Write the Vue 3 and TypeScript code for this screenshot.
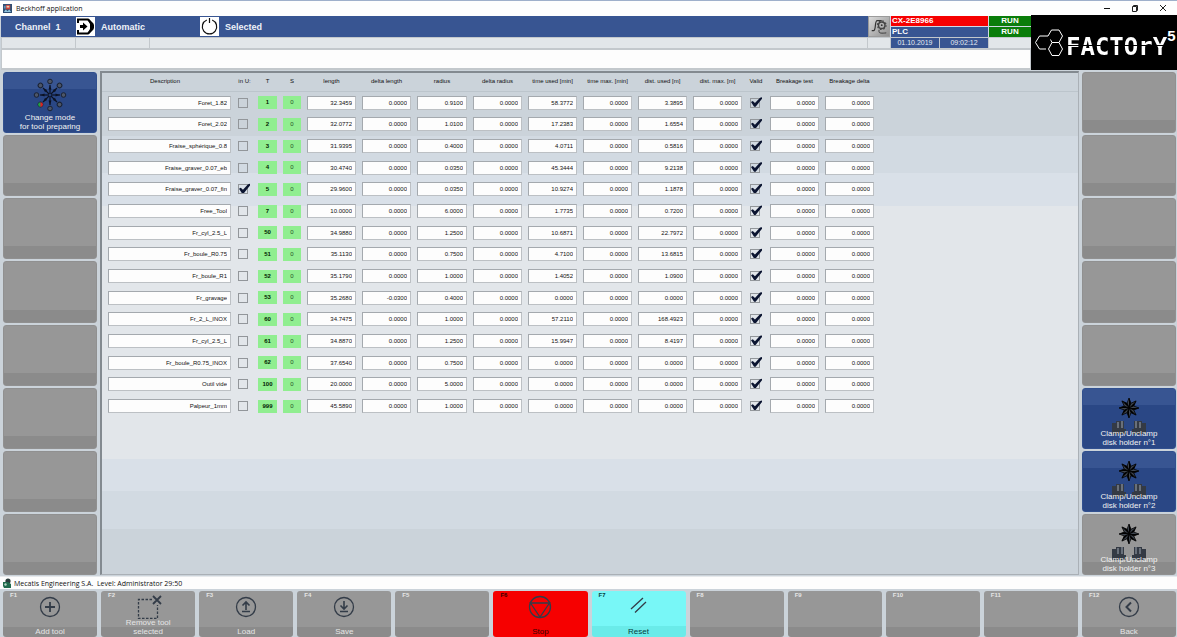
<script setup lang="ts">
import { ref } from 'vue'

interface Tool {
  name: string
  inUse: boolean
  t: number
  values: string[]
}

interface SideKey {
  lines: string[]
  icon: '' | 'wheel' | 'clamp'
  active: boolean
}

interface FunctionKey {
  key: string
  lines: string[]
  icon: '' | 'add' | 'remove' | 'load' | 'save' | 'stop' | 'reset' | 'back'
  tone: 'grey' | 'red' | 'cyan'
}

const zero = '0.0000'

const makeTool = (
  name: string,
  t: number,
  length: string,
  radius: string,
  time: string,
  dist: string,
  deltaLength = zero,
  inUse = false,
): Tool => ({
  name,
  t,
  inUse,
  values: [length, deltaLength, radius, zero, time, zero, dist, zero],
})

const tools = ref<Tool[]>([
  makeTool('Foret_1.82', 1, '32.3459', '0.9100', '58.3772', '3.3895'),
  makeTool('Foret_2.02', 2, '32.0772', '1.0100', '17.2383', '1.6554'),
  makeTool('Fraise_sphérique_0.8', 3, '31.9395', '0.4000', '4.0711', '0.5816'),
  makeTool('Fraise_graver_0.07_eb', 4, '30.4740', '0.0350', '45.3444', '9.2138'),
  makeTool('Fraise_graver_0.07_fin', 5, '29.9600', '0.0350', '10.9274', '1.1878', zero, true),
  makeTool('Free_Tool', 7, '10.0000', '6.0000', '1.7735', '0.7200'),
  makeTool('Fr_cyl_2.5_L', 50, '34.9880', '1.2500', '10.6871', '22.7972'),
  makeTool('Fr_boule_R0.75', 51, '35.1130', '0.7500', '4.7100', '13.6815'),
  makeTool('Fr_boule_R1', 52, '35.1790', '1.0000', '1.4052', '1.0900'),
  makeTool('Fr_gravage', 53, '35.2680', '0.4000', zero, zero, '-0.0300'),
  makeTool('Fr_2_L_INOX', 60, '34.7475', '1.0000', '57.2110', '168.4923'),
  makeTool('Fr_cyl_2.5_L', 61, '34.8870', '1.2500', '15.9947', '8.4197'),
  makeTool('Fr_boule_R0.75_INOX', 62, '37.6540', '0.7500', zero, zero),
  makeTool('Outil vide', 100, '20.0000', '5.0000', zero, zero),
  makeTool('Palpeur_1mm', 999, '45.5890', '1.0000', zero, zero),
])

const valueHeads = [
  'length',
  'delta length',
  'radius',
  'delta radius',
  'time used [min]',
  'time max. [min]',
  'dist. used [m]',
  'dist. max. [m]',
]

const emptyKey: SideKey = { lines: [], icon: '', active: false }
const leftKeys: SideKey[] = [
  { lines: ['Change mode', 'for tool preparing'], icon: 'wheel', active: true },
  ...Array.from({ length: 7 }, () => emptyKey),
]
const rightKeys: SideKey[] = [
  ...Array.from({ length: 5 }, () => emptyKey),
  { lines: ['Clamp/Unclamp', 'disk holder n°1'], icon: 'clamp', active: true },
  { lines: ['Clamp/Unclamp', 'disk holder n°2'], icon: 'clamp', active: true },
  { lines: ['Clamp/Unclamp', 'disk holder n°3'], icon: 'clamp', active: false },
]

const functionKeys: FunctionKey[] = [
  { key: 'F1', lines: ['Add tool'], icon: 'add', tone: 'grey' },
  { key: 'F2', lines: ['Remove tool', 'selected'], icon: 'remove', tone: 'grey' },
  { key: 'F3', lines: ['Load'], icon: 'load', tone: 'grey' },
  { key: 'F4', lines: ['Save'], icon: 'save', tone: 'grey' },
  { key: 'F5', lines: [], icon: '', tone: 'grey' },
  { key: 'F6', lines: ['Stop'], icon: 'stop', tone: 'red' },
  { key: 'F7', lines: ['Reset'], icon: 'reset', tone: 'cyan' },
  { key: 'F8', lines: [], icon: '', tone: 'grey' },
  { key: 'F9', lines: [], icon: '', tone: 'grey' },
  { key: 'F10', lines: [], icon: '', tone: 'grey' },
  { key: 'F11', lines: [], icon: '', tone: 'grey' },
  { key: 'F12', lines: ['Back'], icon: 'back', tone: 'grey' },
]

const spokes = [0, 45, 90, 135, 180, 225, 270, 315]
</script>

<template>
  <div class="app">
    <div class="titlebar">
      <svg class="app-icon" viewBox="0 0 10 10" aria-hidden="true">
        <rect width="10" height="10" fill="#2f4f74" />
        <rect x="3" y="1" width="5" height="5" fill="#c8423a" />
        <rect x="4" y="2" width="3" height="2" fill="#e8c9b0" />
        <path d="M1 9L3 6L5 8L7 6L9 9Z" fill="#8fc4dd" />
        <rect x="1" y="2" width="2" height="3" fill="#5f8fb5" />
      </svg>
      <span class="title">Beckhoff application</span>
      <div class="window-buttons">
        <button type="button" aria-label="Minimize">
          <svg viewBox="0 0 8 8"><path d="M1 4.5H7" stroke="#111" fill="none" /></svg>
        </button>
        <button type="button" aria-label="Restore">
          <svg viewBox="0 0 8 8">
            <path d="M1.5 2.5H5.5V7.5H1.5ZM2.5 2.5V1.5H6.5V6.5H5.5" stroke="#222" fill="none" />
          </svg>
        </button>
        <button type="button" aria-label="Close">
          <svg viewBox="0 0 8 8"><path d="M1 1L7 7M7 1L1 7" stroke="#222" fill="none" /></svg>
        </button>
      </div>
    </div>

    <header class="top">
      <div class="top-left">
        <div class="bar">
          <div class="channel-bar">
            <span class="channel">Channel&nbsp; 1</span>
            <svg class="mode-icon" viewBox="0 0 19 19" aria-hidden="true">
              <rect width="19" height="19" fill="#fff" />
              <path d="M2 6V2.500H12L16.500 7V12L12 16.500H2V13" fill="none" stroke="#000" stroke-width="2" />
              <path d="M11 2H13L18 8V11L13 17H11L14 12V7Z" fill="#000" />
              <path d="M4 8H7V5.5L11.5 9.5L7 13.5V11H4Z" fill="#000" />
            </svg>
            <span class="mode">Automatic</span>
            <svg class="mode-icon" viewBox="0 0 19 19" aria-hidden="true">
              <rect width="19" height="19" fill="#fff" />
              <path d="M6.8 3A7.2 7.2 0 1 0 12.2 3M9.5 1V6" fill="none" stroke="#111" stroke-width="1.2" />
            </svg>
            <span class="selected">Selected</span>
          </div>
          <button class="tool-button" type="button" aria-label="Settings">
            <svg viewBox="0 0 22 21">
              <path d="M3 15H5C8 15 6 4 9 4H14" fill="none" stroke="#333" stroke-width="1.3" />
              <circle cx="14" cy="9" r="3.6" fill="none" stroke="#444" stroke-width="1.6" />
              <circle cx="14" cy="9" r="4.8" fill="none" stroke="#444" stroke-width="1.2" stroke-dasharray="1.8 1.97" />
              <circle cx="14" cy="9" r="1" fill="#333" />
              <path d="M11 14V16C11 18 14 18 19 17.5" fill="none" stroke="#333" />
            </svg>
          </button>
          <div class="machine">
            <span class="cx">CX-2E8966</span>
            <span class="run">RUN</span>
            <span class="plc">PLC</span>
            <span class="run">RUN</span>
          </div>
        </div>
        <div class="strip">
          <span class="cell"></span>
          <span class="cell"></span>
          <span class="cell wide"></span>
          <span class="cell small"></span>
          <span class="date">01.10.2019</span>
          <span class="date">09:02:12</span>
          <span class="cell end"></span>
        </div>
        <div class="message"></div>
      </div>
      <div class="logo">
        <svg class="hexes" viewBox="0 0 30 30" aria-hidden="true">
          <g fill="none" stroke="#fff" stroke-width="1" stroke-linejoin="round">
            <path d="M14 8L17.500 2H25L28.500 8L25 14.500H18L16.500 11.500" />
            <path d="M18 14.500L14.500 21L18 27.500H25L28.500 21L25 14.500" />
            <path d="M14 8H5.500L1.500 14.500L5.500 21H12" />
          </g>
        </svg>
        <span class="word">FACTOrY</span>
        <span class="five">5</span>
      </div>
    </header>

    <main class="main">
      <nav class="side">
        <button v-for="(k, i) in leftKeys" :key="i" type="button" class="side-key" :class="{ active: k.active }" :aria-label="k.lines.length ? undefined : `Left key ${i + 1}`">
          <svg v-if="k.icon === 'wheel'" class="wheel" viewBox="-17 -17 34 34" aria-hidden="true">
            <g v-for="a in spokes" :key="a" :transform="`rotate(${a})`">
              <path d="M0 -1V-10" stroke="#0b1222" stroke-width="1.200" />
              <path d="M-1.500 -5.500L0 -9.500L1.500 -5.500Z" fill="#0b1222" />
              <circle cy="-13.500" r="2.300" fill="#4d5668" stroke="#1a2233" />
            </g>
            <path d="M-9.500 7.200A2.400 2.400 0 0 0 -9.500 12Z" fill="#1fa046" />
            <path d="M-9.500 7.200A2.400 2.400 0 0 1 -9.500 12Z" fill="#e02424" />
          </svg>
          <span class="label"><span v-for="l in k.lines" :key="l">{{ l }}</span></span>
        </button>
      </nav>

      <section class="panel">
        <table>
          <colgroup>
            <col class="c-desc" />
            <col class="c-use" />
            <col class="c-t" />
            <col class="c-s" />
            <col v-for="h in valueHeads" :key="h" class="c-num" :class="{ broad: h === 'radius' }" />
            <col class="c-valid" />
            <col class="c-num" />
            <col class="c-num" />
          </colgroup>
          <thead>
            <tr>
              <th>Description</th>
              <th>in U:</th>
              <th>T</th>
              <th>S</th>
              <th v-for="h in valueHeads" :key="h">{{ h }}</th>
              <th>Valid</th>
              <th>Breakage test</th>
              <th>Breakage delta</th>
            </tr>
          </thead>
          <tbody>
            <tr v-for="tool in tools" :key="tool.t">
              <td><input v-model="tool.name" class="field" type="text" aria-label="Description" /></td>
              <td class="mid"><input v-model="tool.inUse" class="check" type="checkbox" aria-label="In use" /></td>
              <td><span class="badge strong">{{ tool.t }}</span></td>
              <td><span class="badge">0</span></td>
              <td v-for="(v, i) in tool.values" :key="i">
                <input class="field" type="text" :value="v" :aria-label="valueHeads[i]" />
              </td>
              <td class="mid"><input class="check" type="checkbox" checked aria-label="Valid" /></td>
              <td><input class="field" type="text" :value="zero" aria-label="Breakage test" /></td>
              <td><input class="field" type="text" :value="zero" aria-label="Breakage delta" /></td>
            </tr>
          </tbody>
        </table>
      </section>

      <nav class="side">
        <button v-for="(k, i) in rightKeys" :key="i" type="button" class="side-key" :class="{ active: k.active }" :aria-label="k.lines.length ? undefined : `Right key ${i + 1}`">
          <svg v-if="k.icon === 'clamp'" class="clamp" viewBox="0 0 36 40" aria-hidden="true">
            <g transform="translate(18 11)">
              <g v-for="a in spokes" :key="a" :transform="`rotate(${a})`">
                <path d="M0 0L-2 -4.500L0 -10L2 -4.500Z" fill="#3f4650" stroke="#000" stroke-width="0.800" />
                <path d="M0 0V-10L2 -4.500Z" fill="#000" />
              </g>
            </g>
            <path d="M1 26H5V24H13V32H15V37H1Z" fill="#343a44" />
            <path d="M35 26H31V24H23V32H21V37H35Z" fill="#343a44" />
            <path d="M6 25H8V31H6ZM10 24H12V31H10ZM24 24H26V31H24ZM28 25H30V31H28Z" fill="#69707a" />
          </svg>
          <span class="label"><span v-for="l in k.lines" :key="l">{{ l }}</span></span>
        </button>
      </nav>
    </main>

    <div class="statusbar">
      <svg class="user-icon" viewBox="0 0 10 10" aria-hidden="true">
        <circle cx="6" cy="3" r="2.600" fill="#2b3b3b" />
        <path d="M1 4H6L9 6V10H2L1 8Z" fill="#1f6a4c" />
        <circle cx="3.500" cy="6.500" r="1.200" fill="#b8d6c6" />
      </svg>
      <span>Mecatis Engineering S.A.&nbsp; Level: Administrator 29:50</span>
    </div>

    <footer class="fkeys">
      <button v-for="f in functionKeys" :key="f.key" type="button" class="fkey" :class="f.tone">
        <span class="fname">{{ f.key }}</span>
        <svg v-if="f.icon" class="ficon" viewBox="0 0 28 24" aria-hidden="true">
          <g fill="none" stroke="#333c48" stroke-width="1.300">
            <template v-if="f.icon === 'add'">
              <circle cx="14" cy="12" r="9.500" />
              <path d="M14 7V17M9 12H19" stroke-width="1.800" />
            </template>
            <template v-if="f.icon === 'remove'">
              <path d="M18 4.500H4.500V23.500H23.500V10" stroke-dasharray="2.500 1.500" />
              <path d="M19 1L27 9M27 1L19 9" stroke-width="1.800" />
            </template>
            <template v-if="f.icon === 'load'">
              <circle cx="14" cy="12" r="9.500" />
              <path d="M14 15V7M10.500 10.500L14 7L17.500 10.500M10 16.500H18" stroke-width="1.600" />
            </template>
            <template v-if="f.icon === 'save'">
              <circle cx="14" cy="12" r="9.500" />
              <path d="M14 6V14M10.500 10.500L14 14L17.500 10.500M10 16.500H18" stroke-width="1.600" />
            </template>
            <template v-if="f.icon === 'stop'">
              <circle cx="14" cy="12" r="10.500" />
              <path d="M4.500 8H23.500L14 22Z" />
            </template>
            <template v-if="f.icon === 'reset'">
              <path d="M6 14L18 3M10 17.500L21 7" />
            </template>
            <template v-if="f.icon === 'back'">
              <circle cx="14" cy="12" r="9.500" />
              <path d="M16 7.500L11.500 12L16 16.500" stroke-width="2" />
            </template>
          </g>
        </svg>
        <span class="label"><span v-for="l in f.lines" :key="l">{{ l }}</span></span>
      </button>
    </footer>
  </div>
</template>

<style>
body {
  margin: 0;
}
</style>

<style scoped>
.app {
  display: flex;
  flex-direction: column;
  min-height: 100vh;
  background: #cbd3da;
  font-family: "Liberation Sans", Arial, sans-serif;
  color: #111;
}

.app *,
.app {
  box-sizing: border-box;
}

button {
  border: 0;
  padding: 0;
  margin: 0;
  font: inherit;
  color: inherit;
  background: none;
}

svg {
  display: block;
}

.titlebar {
  display: flex;
  align-items: center;
  height: 15px;
  padding-left: 3px;
  border-top: 1px solid #9fb0cb;
  background: #fefefe;
  font: 7px "Open Sans", "Noto Sans", sans-serif;
}

.app-icon {
  width: 9px;
  height: 9px;
  margin-right: 4px;
}

.title {
  flex: 1;
}

.window-buttons {
  display: flex;
  gap: 20px;
  padding-right: 10px;
}

.window-buttons svg {
  width: 8px;
  height: 8px;
}

.top {
  display: grid;
  grid-template-columns: minmax(0, 1fr) 146px;
}

.top-left {
  padding-left: 1px;
  border-top: 1px solid #fefefe;
}

.bar {
  display: grid;
  grid-template-columns: minmax(0, 1fr) 22px 141px;
  height: 21px;
}

.channel-bar {
  display: flex;
  align-items: center;
  padding-left: 14px;
  background: #385592;
  color: #eef2f8;
  font-size: 9px;
  font-weight: bold;
}

.channel {
  width: 61px;
}

.mode-icon {
  width: 19px;
  height: 19px;
  margin-right: 6px;
}

.mode {
  width: 99px;
}

.tool-button {
  background: linear-gradient(135deg, #dadada, #8f8f8f);
  border: 1px solid #9b9b9b;
}

.tool-button svg {
  width: 100%;
  height: 100%;
}

.machine {
  display: grid;
  grid-template-columns: 97px 1fr;
  grid-template-rows: 1fr 10px;
  gap: 1px;
  background: #cfd8e4;
  padding-left: 1px;
  font-size: 8px;
  line-height: 10px;
  font-weight: bold;
  color: #fff;
}

.cx {
  padding-left: 1px;
  background: #f60000;
}

.plc {
  padding-left: 1px;
  background: #385592;
}

.run {
  background: #0a7d0a;
  text-align: center;
}

.strip {
  display: flex;
  gap: 1px;
  height: 12px;
  padding: 1px 0 1px 1px;
  background: #c3c8cc;
}

.cell {
  width: 73px;
  background: #e2e6e9;
}

.cell.wide {
  flex: 1;
}

.cell.small {
  width: 22px;
}

.cell.end {
  width: 42px;
}

.date {
  width: 48px;
  background: #385592;
  color: #e6ebf3;
  font-size: 7px;
  line-height: 10px;
  text-align: center;
}

.message {
  height: 21px;
  border: 1px solid #c3c8cc;
  border-bottom-width: 2px;
  background: #fdfdfd;
}

.logo {
  display: flex;
  align-items: center;
  padding-left: 3px;
  background: #000;
  color: #fff;
  overflow: hidden;
}

.hexes {
  width: 30px;
  height: 30px;
  flex: none;
  margin-right: 2px;
}

.word {
  font-family: "DejaVu Sans Mono", monospace;
  font-weight: bold;
  font-size: 24px;
  line-height: 28px;
  margin-top: 8px;
  background: linear-gradient(#fff 42%, #000 42%, #000 46%, #fff 46%);
  background-clip: text;
  color: transparent;
}

.five {
  align-self: flex-start;
  margin-top: 12px;
  font-size: 15px;
  line-height: 17px;
  font-weight: bold;
}

.main {
  flex: 1;
  display: grid;
  grid-template-columns: 94px minmax(0, 1fr) 94px;
  gap: 3px;
  padding: 1px 1px 1px 3px;
  min-height: 505px;
}

.side {
  display: flex;
  flex-direction: column;
  gap: 2px;
  padding-top: 1px;
}

.side-key {
  flex: 1;
  display: grid;
  border-radius: 3px;
  background: linear-gradient(#979797 80%, #8b8b8b 80%);
  border: 1px solid #909090;
  color: #f2f2f2;
}

.side-key.active {
  background: linear-gradient(#385592 27%, #2a4785 27%);
  border-color: #31508f;
}

.side-key > *,
.fkey > * {
  grid-area: 1 / 1;
}

.label {
  align-self: end;
  display: flex;
  flex-direction: column;
  padding-bottom: 1px;
  text-align: center;
  font-size: 8px;
  line-height: 9px;
}

.wheel {
  width: 34px;
  height: 34px;
  margin-top: 5px;
  justify-self: center;
  align-self: start;
}

.clamp {
  width: 36px;
  height: 40px;
  margin-top: 8px;
  justify-self: center;
  align-self: start;
}

.panel {
  border: 2px solid #838a90;
  border-right: 1px solid #aab0b6;
  border-bottom: 1px solid #aab0b6;
  background: linear-gradient(
    #cbd3da 12.5%,
    #d2dae2 12.5%,
    #d2dae2 20%,
    #d9e0e8 20%,
    #d9e0e8 26.5%,
    #e2e6ea 26.5%,
    #e2e6ea 77%,
    #d9e0e8 77%,
    #d9e0e8 83.5%,
    #d2dae2 83.5%,
    #d2dae2 91%,
    #cbd3da 91%
  );
}

table {
  width: 775px;
  height: 344px;
  table-layout: fixed;
  border-collapse: collapse;
  font-size: 6px;
}

.c-desc {
  width: 132px;
}

.c-use {
  width: 21px;
}

.c-t {
  width: 25px;
}

.c-s {
  width: 24px;
}

.c-num {
  width: 55px;
}

.c-num.broad {
  width: 56px;
}

.c-valid {
  width: 22px;
}

.panel::before {
  content: "";
  display: block;
  height: 1px;
  margin: 18px 0 -19px;
  background: #bcc5cc;
}

thead tr {
  height: 19px;
}

th {
  padding: 0 0 3px;
  font-weight: normal;
  white-space: nowrap;
  overflow: hidden;
}

th:first-child {
  padding-right: 6px;
}

td {
  padding: 0 3px;
}

td:first-child {
  padding-left: 6px;
}

td.mid {
  padding: 0 4px;
}

.mid:nth-last-child(3) {
  padding-left: 5px;
}

.field {
  display: block;
  width: 100%;
  height: 14px;
  margin: 0;
  padding: 0 3px;
  border: 1px solid #a4a9ae;
  border-right-color: #bcc0c4;
  border-bottom-color: #bcc0c4;
  border-radius: 0;
  background: #fdfdfd;
  color: #111;
  font: inherit;
  text-align: right;
}

.badge {
  display: block;
  height: 13px;
  background: #90ee90;
  color: #245224;
  line-height: 13px;
  text-align: center;
}

.strong {
  color: #001a00;
  font-weight: bold;
}

.check {
  appearance: none;
  display: block;
  position: relative;
  width: 10px;
  height: 10px;
  margin: 0;
  border: 1px solid #92969a;
}

.check:checked::before {
  content: "";
  position: absolute;
  left: 0;
  top: -2px;
  width: 11px;
  height: 10px;
  background: #0b1430;
  clip-path: polygon(0 52%, 16% 42%, 36% 62%, 82% 8%, 100% 4%, 100% 20%, 42% 100%, 28% 100%);
}

.statusbar {
  display: flex;
  align-items: center;
  gap: 2px;
  height: 13px;
  padding-left: 2px;
  border-top: 1px solid #e6e9ec;
  background: #fdfdfd;
  font: 7px "Open Sans", "Noto Sans", sans-serif;
}

.user-icon {
  width: 10px;
  height: 10px;
}

.fkeys {
  display: grid;
  grid-template-columns: repeat(12, minmax(0, 1fr));
  gap: 4px;
  padding: 2px 1px 0 3px;
}

.fkey {
  display: grid;
  height: 46px;
  border-radius: 3px;
  color: #e6e6e6;
}

.grey {
  background: linear-gradient(#979797 78%, #8b8b8b 78%);
}

.red {
  background: #f60000;
  color: #300;
}

.cyan {
  background: linear-gradient(#78f7f7 76%, #6aebe9 76%);
  color: #053c3c;
}

.fname {
  justify-self: start;
  align-self: start;
  padding-left: 7px;
  font-size: 6px;
  line-height: 8px;
  font-weight: bold;
}

.ficon {
  width: 28px;
  height: 24px;
  margin-top: 4px;
  justify-self: center;
  align-self: start;
}
</style>
